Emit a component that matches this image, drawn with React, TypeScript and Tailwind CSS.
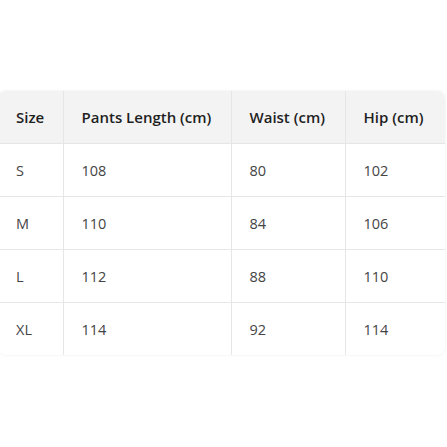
import React from "react";

const rows = [
  ["S", "108", "80", "102"],
  ["M", "110", "84", "106"],
  ["L", "112", "88", "110"],
  ["XL", "114", "92", "114"],
];

export default function App() {
  return (
    <div className="w-[447px] h-[447px] bg-white overflow-hidden" style={{ fontFamily: '"Open Sans", "Noto Sans", sans-serif' }}>
      <div className="pt-[91px] ml-[-2px] w-[447px]">
        <div className="rounded-lg overflow-hidden shadow-[0_0_3px_rgba(0,0,0,0.08)]">
          <table className="w-full border-collapse text-[14.5px]">
            <colgroup>
              <col className="w-[65px]" />
              <col className="w-[168px]" />
              <col className="w-[114px]" />
              <col className="w-[100px]" />
            </colgroup>
            <thead>
              <tr className="bg-[#f3f3f3] h-[52px]">
                {["Size", "Pants Length (cm)", "Waist (cm)", "Hip (cm)"].map((h, i) => (
                  <th
                    key={h}
                    className={`text-left text-[15px] font-semibold text-[#1f1f1f] pl-[18px] pt-[1px] border-b border-[#e6e6e6] ${i < 3 ? "border-r" : ""}`}
                  >
                    {h}
                  </th>
                ))}
              </tr>
            </thead>
            <tbody>
              {rows.map((r, ri) => (
                <tr key={ri} className="h-[53px]">
                  {r.map((c, i) => (
                    <td
                      key={i}
                      className={`pl-[18px] pt-[2px] text-[#454545] border-[#e6e6e6] ${ri < 3 ? "border-b" : ""} ${i < 3 ? "border-r" : ""}`}
                    >
                      {c}
                    </td>
                  ))}
                </tr>
              ))}
            </tbody>
          </table>
        </div>
      </div>
    </div>
  );
}
